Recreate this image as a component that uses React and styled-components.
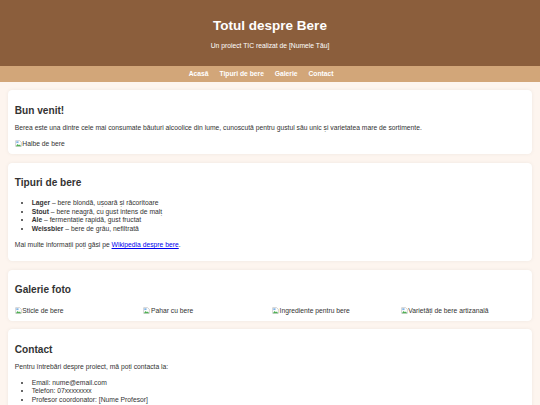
import styled, { createGlobalStyle } from 'styled-components';

const GlobalStyle = createGlobalStyle`
  html, body {
    margin: 0;
    padding: 0;
  }
  body {
    font-family: "Liberation Sans", Arial, sans-serif;
    font-size: 6.75px;
    background: #fdf5ef;
    color: #333;
  }
`;

const typesOfBeer = [
  { name: 'Lager', text: 'bere blondă, ușoară și răcoritoare' },
  { name: 'Stout', text: 'bere neagră, cu gust intens de malț' },
  { name: 'Ale', text: 'fermentație rapidă, gust fructat' },
  { name: 'Weissbier', text: 'bere de grâu, nefiltrată' },
];

const gallery = ['Sticle de bere', 'Pahar cu bere', 'Ingrediente pentru bere', 'Varietăți de bere artizanală'];

const BrokenIcon = () => (
  <svg width='7' height='7' viewBox='0 0 16 16'>
    <path d='M1.5 1.5h9l4 4v9h-13z' fill='#fff' stroke='#9a9a9a' strokeWidth='1' />
    <path d='M2 14l4-5 3 3 2-2 3 4z' fill='#4caf50' />
    <rect x='3' y='3' width='5' height='4' fill='#7fb3e6' />
  </svg>
);

const Missing = ({ alt }) => (
  <AltImage>
    <BrokenIcon />
    {alt}
  </AltImage>
);

const App = () => {
  return (
    <>
      <GlobalStyle />
      <Header>
        <Title>Totul despre Bere</Title>
        <Subtitle>Un proiect TIC realizat de [Numele Tău]</Subtitle>
      </Header>
      <Nav>
        <NavLink href='#acasa'>Acasă</NavLink>
        <NavLink href='#tipuri'>Tipuri de bere</NavLink>
        <NavLink href='#galerie'>Galerie</NavLink>
        <NavLink href='#contact'>Contact</NavLink>
      </Nav>
      <Main>
        <Section id='acasa'>
          <Heading>Bun venit!</Heading>
          <Text>
            Berea este una dintre cele mai consumate băuturi alcoolice din lume, cunoscută pentru gustul său unic și
            varietatea mare de sortimente.
          </Text>
          <ImageLine>
            <Missing alt='Halbe de bere' />
          </ImageLine>
        </Section>

        <Section id='tipuri'>
          <Heading>Tipuri de bere</Heading>
          <List $spaced>
            {typesOfBeer.map(beer => (
              <li key={beer.name}>
                <strong>{beer.name}</strong> – {beer.text}
              </li>
            ))}
          </List>
          <Text>
            Mai multe informații poți găsi pe <Link href='#wiki'>Wikipedia despre bere</Link>.
          </Text>
        </Section>

        <Section id='galerie'>
          <Heading>Galerie foto</Heading>
          <Gallery>
            {gallery.map(alt => (
              <ImageLine key={alt} $low>
                <Missing alt={alt} />
              </ImageLine>
            ))}
          </Gallery>
        </Section>

        <Section id='contact'>
          <Heading>Contact</Heading>
          <Text>Pentru întrebări despre proiect, mă poți contacta la:</Text>
          <List>
            <li>Email: nume@email.com</li>
            <li>Telefon: 07xxxxxxxx</li>
            <li>Profesor coordonator: [Nume Profesor]</li>
          </List>
        </Section>
      </Main>
    </>
  );
};

const Header = styled.header`
  background: #8b5e3c;
  color: #fff;
  text-align: center;
  padding: 9.44px 8.44px 10.44px;
`;

const Title = styled.h1`
  font-size: 13.5px;
  margin: 9.05px 0 8.05px;
`;

const Subtitle = styled.p`
  font-size: 6.75px;
  margin: 6.75px 0;
`;

const Nav = styled.nav`
  display: flex;
  justify-content: center;
  gap: 10.8px;
  background: #d2a679;
  padding: 4.22px 22px 4.22px 4.22px;
`;

const NavLink = styled.a`
  color: #fff;
  font-weight: bold;
  text-decoration: none;
  line-height: 7.76px;
`;

const Main = styled.main`
  padding: 8.44px;
`;

const Section = styled.section`
  background: #fff;
  padding: 6.33px;
  margin-bottom: 8.44px;
  border-radius: 4.2px;
  box-shadow: 0 0 4px rgba(0, 0, 0, 0.06);
`;

const Heading = styled.h2`
  font-size: 10.125px;
  margin: 8.4px 0;
`;

const Text = styled.p`
  margin: 6.75px 0;
`;

const List = styled.ul`
  margin: ${props => (props.$spaced ? '10px 0 8.4px' : '7.5px 0 6.75px')};
  padding-left: 16.9px;

  li {
    padding: 0.8px 0;
  }
`;

const Link = styled.a`
  color: #0000ee;
`;

const ImageLine = styled.div`
  height: ${props => (props.$low ? '10.7px' : '9.7px')};
  display: flex;
  align-items: ${props => (props.$low ? 'flex-end' : 'center')};
`;

const AltImage = styled.span`
  display: inline-flex;
  align-items: center;
  gap: 0.5px;
  color: #333;
`;

const Gallery = styled.div`
  display: grid;
  grid-template-columns: repeat(4, 1fr);
  gap: 4.22px;
`;

export default App;
